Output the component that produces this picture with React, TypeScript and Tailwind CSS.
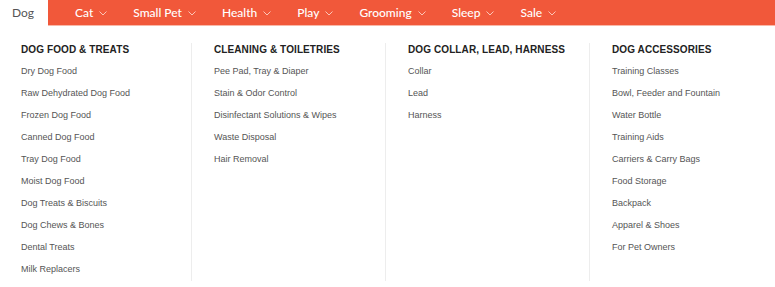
const navItems = ['Cat', 'Small Pet', 'Health', 'Play', 'Grooming', 'Sleep', 'Sale'];

const columns = [
  {
    title: 'DOG FOOD & TREATS',
    width: 'w-[192px]',
    pad: 'pl-[21px]',
    items: [
      'Dry Dog Food',
      'Raw Dehydrated Dog Food',
      'Frozen Dog Food',
      'Canned Dog Food',
      'Tray Dog Food',
      'Moist Dog Food',
      'Dog Treats & Biscuits',
      'Dog Chews & Bones',
      'Dental Treats',
      'Milk Replacers',
    ],
  },
  {
    title: 'CLEANING & TOILETRIES',
    width: 'w-[194px]',
    pad: 'pl-[22px]',
    items: ['Pee Pad, Tray & Diaper', 'Stain & Odor Control', 'Disinfectant Solutions & Wipes', 'Waste Disposal', 'Hair Removal'],
  },
  {
    title: 'DOG COLLAR, LEAD, HARNESS',
    width: 'w-[204px]',
    pad: 'pl-[22px]',
    items: ['Collar', 'Lead', 'Harness'],
  },
  {
    title: 'DOG ACCESSORIES',
    width: 'flex-1',
    pad: 'pl-[22px]',
    items: [
      'Training Classes',
      'Bowl, Feeder and Fountain',
      'Water Bottle',
      'Training Aids',
      'Carriers & Carry Bags',
      'Food Storage',
      'Backpack',
      'Apparel & Shoes',
      'For Pet Owners',
    ],
  },
];

function Chevron() {
  return (
    <svg width="8" height="5" viewBox="0 0 8 5" fill="none" className="ml-[6px] mt-[1px]">
      <path d="M0.5 0.5L4 4L7.5 0.5" stroke="#fbc5b6" strokeWidth="1" />
    </svg>
  );
}

export default function App() {
  return (
    <div className="w-[775px] h-[287px] bg-white overflow-hidden">
      <nav className="flex h-[25px] font-['Lato',sans-serif] text-[12px]">
        <a className="w-[48px] h-[24px] flex items-center pl-[12px] pt-[1px] text-[#555]">Dog</a>
        <div className="flex-1 flex items-center h-[24px] pt-[1px] bg-[#f1583a] border-b border-[#f9b8a8] box-content pl-[14px]">
          {navItems.map((item) => (
            <a key={item} className="flex items-center px-[13px] text-white font-medium">
              {item}
              <Chevron />
            </a>
          ))}
        </div>
      </nav>

      <div className="flex pt-[18px] font-['Liberation_Sans',Arial,sans-serif]">
        {columns.map((col, i) => (
          <div
            key={col.title}
            className={`${col.width} ${col.pad} pb-[1px] ${i < columns.length - 1 ? 'border-r border-[#ededed]' : ''}`}
          >
            <h3 className="text-[10px] leading-[14px] font-bold tracking-[0.1px] text-[#222]">{col.title}</h3>
            <ul className="mt-[3px]">
              {col.items.map((item) => (
                <li key={item} className="text-[9px] leading-[22px] text-[#555]">
                  {item}
                </li>
              ))}
            </ul>
          </div>
        ))}
      </div>
    </div>
  );
}
